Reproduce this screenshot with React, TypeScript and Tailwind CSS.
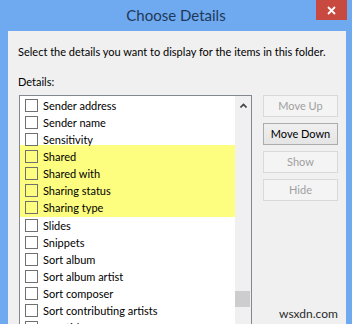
import React from "react";

type Item = { label: string };

const before: Item[] = [
  { label: "Sender address" },
  { label: "Sender name" },
  { label: "Sensitivity" },
];
const marked: Item[] = [
  { label: "Shared" },
  { label: "Shared with" },
  { label: "Sharing status" },
  { label: "Sharing type" },
];
const after: Item[] = [
  { label: "Slides" },
  { label: "Snippets" },
  { label: "Sort album" },
  { label: "Sort album artist" },
  { label: "Sort composer" },
  { label: "Sort contributing artists" },
  { label: "Sort title" },
];

function Row({ label }: Item) {
  return (
    <div className="flex h-[17px] items-center pl-[5px]">
      <span className="h-[13px] w-[13px] shrink-0 border border-[#707070]" />
      <span className="ml-[5px] whitespace-nowrap text-[11px] leading-none text-black">
        {label}
      </span>
    </div>
  );
}

function Btn({ label, enabled }: { label: string; enabled?: boolean }) {
  return (
    <div
      className={
        enabled
          ? "flex h-[22px] w-[75px] items-center justify-center border border-[#acacac] bg-gradient-to-b from-[#f0f0f0] to-[#e5e5e5] text-[11px] text-black"
          : "flex h-[22px] w-[75px] items-center justify-center border border-[#d9d9d9] bg-[#f4f4f4] text-[11px] text-[#a0a0a0]"
      }
    >
      {label}
    </div>
  );
}

export default function App() {
  return (
    <div
      className="relative flex h-[324px] w-[352px] flex-col overflow-hidden bg-[#6fa9ef]"
      style={{ fontFamily: 'Lato, "Noto Sans", sans-serif' }}
    >
      <div className="flex h-[31px] shrink-0 items-center justify-center text-[15px] text-[#1e395b]">
        Choose Details
      </div>
      <div className="absolute right-[5px] top-0 flex h-[20px] w-[31px] items-center justify-center bg-[#c7493f]">
        <svg width="9" height="9" viewBox="0 0 9 9">
          <path d="M1 1L8 8M8 1L1 8" stroke="#fff" strokeWidth="1.8" />
        </svg>
      </div>

      <div className="mx-[6px] ml-[8px] flex-1 overflow-hidden bg-[#f0f0f0] pl-[10px] pt-[13px]">
        <p className="whitespace-nowrap text-[11px] leading-[15px] text-black">
          Select the details you want to display for the items in this folder.
        </p>
        <p className="mt-[15px] text-[11px] leading-[15px] text-black">Details:</p>

        <div className="mt-[6px] flex items-start">
          <div className="ml-px flex h-[260px] w-[233px] border border-[#828790] bg-white">
            <div className="flex-1 pt-[1px]">
              {before.map((it) => (
                <Row key={it.label} {...it} />
              ))}
              <div className="-mt-[3px] bg-[#fdfd80] pb-px pt-[3px]">
                {marked.map((it) => (
                  <Row key={it.label} {...it} />
                ))}
              </div>
              {after.map((it) => (
                <Row key={it.label} {...it} />
              ))}
            </div>
            <div className="flex w-[16px] flex-col bg-[#f0f0f0]">
              <div className="flex h-[17px] items-center justify-center pt-[2px]">
                <svg width="7" height="5" viewBox="0 0 7 5">
                  <path d="M0.5 4.5L3.5 1.5L6.5 4.5" stroke="#404040" strokeWidth="1.6" fill="none" />
                </svg>
              </div>
              <div className="mt-[178px] h-[16px] w-[15px] bg-[#cdcdcd]" />
            </div>
          </div>

          <div className="ml-[11px] flex flex-col gap-[6px]">
            <Btn label="Move Up" />
            <Btn label="Move Down" enabled />
            <Btn label="Show" />
            <Btn label="Hide" />
          </div>
        </div>
      </div>

      <div className="absolute left-[279px] top-[305px] text-[12px] text-[#2b2b2b]">
        wsxdn.com
      </div>
    </div>
  );
}
